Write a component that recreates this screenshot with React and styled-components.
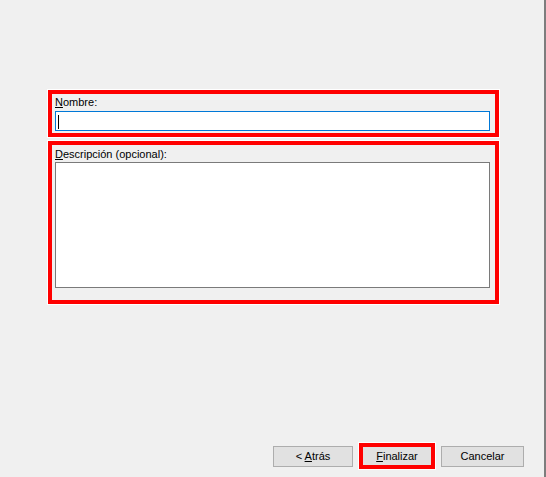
import React from 'react';
import styled, { createGlobalStyle } from 'styled-components';

const GlobalStyle = createGlobalStyle`
  html, body {
    margin: 0;
    padding: 0;
    background: #f0f0f0;
  }
  body {
    font-family: "Liberation Sans", Arial, sans-serif;
    font-size: 11px;
    color: #000;
  }
`;

const Window = styled.div`
  box-sizing: border-box;
  width: 546px;
  height: 477px;
  display: flex;
  flex-direction: column;
  background: #f0f0f0;
  border-right: 2px solid #7d7d7d;
  padding-top: 90px;
`;

// red annotation frame around a group of fields
const Highlight = styled.div`
  box-sizing: border-box;
  width: 451px;
  margin-left: 48px;
  margin-top: ${(p) => p.$mt || 0}px;
  padding: ${(p) => p.$pt}px 5px ${(p) => p.$pb}px 3px;
  border: 4px solid #ff0000;
  box-shadow: 0 0 0 1px #ffffff;
`;

const Label = styled.div`
  height: 13px;
  line-height: 13px;
  margin-bottom: ${(p) => p.$gap}px;
  white-space: nowrap;
`;

const Key = styled.span`
  text-decoration: underline;
  text-underline-offset: 1px;
`;

const TextBox = styled.div`
  box-sizing: border-box;
  width: 435px;
  height: 20px;
  padding: 3px 0 0 2px;
  background: #ffffff;
  border: 1px solid #0078d7;
`;

const Caret = styled.div`
  width: 1px;
  height: 14px;
  background: #000;
`;

const TextArea = styled.div`
  box-sizing: border-box;
  width: 435px;
  height: 126px;
  background: #ffffff;
  border: 1px solid #7a7a7a;
`;

const Spacer = styled.div`
  flex: 1;
`;

const ButtonRow = styled.div`
  display: flex;
  align-items: center;
  justify-content: flex-end;
  gap: 6px;
  height: 26px;
  padding-right: 20px;
  margin-bottom: 8px;
`;

const Button = styled.button`
  box-sizing: border-box;
  width: ${(p) => p.$w}px;
  height: ${(p) => p.$h || 21}px;
  padding: 0;
  background: #e1e1e1;
  border: ${(p) => (p.$bare ? 'none' : '1px solid #adadad')};
  font-family: "Liberation Sans", Arial, sans-serif;
  font-size: 11px;
  color: #000;
  line-height: 1;
`;

const FocusFrame = styled.div`
  box-sizing: border-box;
  width: 76px;
  height: 26px;
  border: 4px solid #ff0000;
  box-shadow: 0 0 0 1px #ffffff;
  display: flex;
`;

export default function App() {
  return (
    <>
      <GlobalStyle />
      <Window>
        <Highlight $pt={2} $pb={2}>
          <Label $gap={2}>
            <Key>N</Key>ombre:
          </Label>
          <TextBox>
            <Caret />
          </TextBox>
        </Highlight>

        <Highlight $mt={4} $pt={3} $pb={12}>
          <Label $gap={1}>
            <Key>D</Key>escripción (opcional):
          </Label>
          <TextArea />
        </Highlight>

        <Spacer />

        <ButtonRow>
          <Button $w={80}>
            &lt; <Key>A</Key>trás
          </Button>
          <FocusFrame>
            <Button $w={68} $h={18} $bare>
              <Key>F</Key>inalizar
            </Button>
          </FocusFrame>
          <Button $w={83}>Cancelar</Button>
        </ButtonRow>
      </Window>
    </>
  );
}
